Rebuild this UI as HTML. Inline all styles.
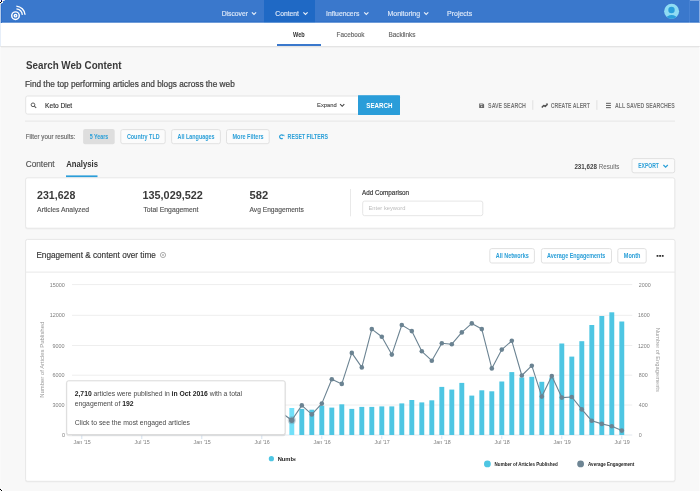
<!DOCTYPE html>
<html><head><meta charset="utf-8"><title>Search Web Content</title>
<style>
html,body{margin:0;padding:0}
body{width:700px;height:491px;overflow:hidden;position:relative;background:#f8f8f8;font-family:"Liberation Sans",sans-serif}
.t{position:absolute;left:0;top:0;white-space:nowrap;line-height:1;display:block;transform-origin:0 0}
.abs{position:absolute;box-sizing:border-box}
.card{position:absolute;box-sizing:border-box;background:#fff;border:1px solid #e6e6e6;border-radius:2px;box-shadow:0 1px 2px rgba(0,0,0,.06)}
.btn{position:absolute;box-sizing:border-box;background:#fff;border:1px solid #e1e1e1;border-radius:2px}
</style></head><body>
<!-- nav -->
<div class="abs" style="left:0;top:0;width:700px;height:23px;background:#3a78cc"></div>
<div class="abs" style="left:0;top:21px;width:700px;height:2px;background:#3272c9"></div>
<div class="abs" style="left:263.8px;top:0;width:50.8px;height:23px;background:#1f69c5"></div>
<div class="abs" style="left:688.5px;top:0;width:1px;height:23px;background:#4681d2"></div>
<svg width="700" height="24" viewBox="0 0 700 24" style="position:absolute;left:0;top:0"><rect x="0" y="22.7" width="700" height="1.3" fill="#fff"/></svg>
<!-- subnav -->
<div class="abs" style="left:0;top:23px;width:700px;height:23px;background:#fff;box-shadow:0 1px 1.5px rgba(0,0,0,.11)"></div>
<div class="abs" style="left:277px;top:44px;width:44.3px;height:2px;background:#3a78cc"></div>
<svg width="700" height="491" viewBox="0 0 700 491" style="position:absolute;left:0;top:0">
<rect x="25.70" y="96.00" width="333.80" height="18.10" rx="2" fill="#fff" stroke="#e4e4e4" stroke-width="1" />
<rect x="358.10" y="95.40" width="41.90" height="19.50" rx="0" fill="#2a9dd9" />
<path d="M358.1 95.4 H398 a2 2 0 0 1 2 2 V112.9 a2 2 0 0 1 -2 2 H358.1 Z" fill="#2a9dd9"/>
<rect x="25.00" y="120.60" width="650.00" height="1.00" rx="0" fill="#e6e6e6" />
<rect x="532.30" y="100.20" width="1.00" height="9.60" rx="0" fill="#e0e0e0" />
<rect x="596.40" y="100.20" width="1.00" height="9.60" rx="0" fill="#e0e0e0" />
<rect x="83.10" y="129.10" width="31.60" height="15.10" rx="2" fill="#dedede" />
<rect x="120.80" y="129.60" width="44.40" height="14.10" rx="2" fill="#fbfbfb" stroke="#e1e1e1" stroke-width="1" />
<rect x="171.60" y="129.60" width="48.80" height="14.10" rx="2" fill="#fbfbfb" stroke="#e1e1e1" stroke-width="1" />
<rect x="226.50" y="129.60" width="42.70" height="14.10" rx="2" fill="#fbfbfb" stroke="#e1e1e1" stroke-width="1" />
<rect x="66.00" y="175.40" width="31.50" height="2.00" rx="0" fill="#2a9dd9" />
<rect x="632.00" y="158.60" width="42.70" height="14.20" rx="2" fill="#fbfbfb" stroke="#e1e1e1" stroke-width="1" />
<rect x="25.10" y="178.00" width="650.20" height="51.40" rx="2" fill="#000" opacity="0.035"/>
<rect x="25.60" y="177.80" width="649.20" height="50.40" rx="2" fill="#fff" stroke="#e7e7e7" stroke-width="1" />
<rect x="350.00" y="189.00" width="1.00" height="27.30" rx="0" fill="#e9e9e9" />
<rect x="362.70" y="201.10" width="120.10" height="14.60" rx="2" fill="#fff" stroke="#e6e6e6" stroke-width="1" />
<rect x="25.10" y="239.90" width="650.40" height="242.60" rx="2" fill="#000" opacity="0.035"/>
<rect x="25.60" y="239.40" width="649.40" height="241.90" rx="2" fill="#fff" stroke="#e7e7e7" stroke-width="1" />
<rect x="25.60" y="271.60" width="649.40" height="1.00" rx="0" fill="#e8e8e8" />
<rect x="489.80" y="248.60" width="44.60" height="14.40" rx="2" fill="#fff" stroke="#e1e1e1" stroke-width="1" />
<rect x="541.40" y="248.60" width="70.10" height="14.40" rx="2" fill="#fff" stroke="#e1e1e1" stroke-width="1" />
<rect x="617.80" y="248.60" width="28.40" height="14.40" rx="2" fill="#fff" stroke="#e1e1e1" stroke-width="1" />
</svg>
<svg class="chart" width="700" height="491" viewBox="0 0 700 491" style="position:absolute;left:0;top:0">
<line x1="72" x2="632.3" y1="284.6" y2="284.6" stroke="#eeeeee" stroke-width="1"/>
<line x1="72" x2="632.3" y1="315.3" y2="315.3" stroke="#eeeeee" stroke-width="1"/>
<line x1="72" x2="632.3" y1="345.5" y2="345.5" stroke="#eeeeee" stroke-width="1"/>
<line x1="72" x2="632.3" y1="375.2" y2="375.2" stroke="#eeeeee" stroke-width="1"/>
<line x1="72" x2="632.3" y1="405.0" y2="405.0" stroke="#eeeeee" stroke-width="1"/>
<line x1="72" x2="632.3" y1="435.0" y2="435.0" stroke="#e3e8ee" stroke-width="1"/>
<line x1="81.8" x2="81.8" y1="435.5" y2="439" stroke="#d5e3f0" stroke-width="1"/>
<line x1="141.8" x2="141.8" y1="435.5" y2="439" stroke="#d5e3f0" stroke-width="1"/>
<line x1="201.8" x2="201.8" y1="435.5" y2="439" stroke="#d5e3f0" stroke-width="1"/>
<line x1="261.8" x2="261.8" y1="435.5" y2="439" stroke="#d5e3f0" stroke-width="1"/>
<line x1="321.8" x2="321.8" y1="435.5" y2="439" stroke="#d5e3f0" stroke-width="1"/>
<line x1="381.8" x2="381.8" y1="435.5" y2="439" stroke="#d5e3f0" stroke-width="1"/>
<line x1="441.8" x2="441.8" y1="435.5" y2="439" stroke="#d5e3f0" stroke-width="1"/>
<line x1="501.8" x2="501.8" y1="435.5" y2="439" stroke="#d5e3f0" stroke-width="1"/>
<line x1="561.8" x2="561.8" y1="435.5" y2="439" stroke="#d5e3f0" stroke-width="1"/>
<line x1="621.8" x2="621.8" y1="435.5" y2="439" stroke="#d5e3f0" stroke-width="1"/>
<rect x="289.35" y="408.0" width="4.9" height="27.0" fill="#72e0f9"/>
<rect x="299.35" y="408.9" width="4.9" height="26.1" fill="#4ec6e3"/>
<rect x="309.35" y="409.7" width="4.9" height="25.3" fill="#4ec6e3"/>
<rect x="319.35" y="405.7" width="4.9" height="29.3" fill="#4ec6e3"/>
<rect x="329.35" y="407.6" width="4.9" height="27.4" fill="#4ec6e3"/>
<rect x="339.35" y="404.3" width="4.9" height="30.7" fill="#4ec6e3"/>
<rect x="349.35" y="408.9" width="4.9" height="26.1" fill="#4ec6e3"/>
<rect x="359.35" y="406.9" width="4.9" height="28.1" fill="#4ec6e3"/>
<rect x="369.35" y="406.9" width="4.9" height="28.1" fill="#4ec6e3"/>
<rect x="379.35" y="406.4" width="4.9" height="28.6" fill="#4ec6e3"/>
<rect x="389.35" y="406.4" width="4.9" height="28.6" fill="#4ec6e3"/>
<rect x="399.35" y="403.4" width="4.9" height="31.6" fill="#4ec6e3"/>
<rect x="409.35" y="400.0" width="4.9" height="35.0" fill="#4ec6e3"/>
<rect x="419.35" y="402.4" width="4.9" height="32.6" fill="#4ec6e3"/>
<rect x="429.35" y="400.3" width="4.9" height="34.7" fill="#4ec6e3"/>
<rect x="439.35" y="386.9" width="4.9" height="48.1" fill="#4ec6e3"/>
<rect x="449.35" y="389.6" width="4.9" height="45.4" fill="#4ec6e3"/>
<rect x="459.35" y="382.9" width="4.9" height="52.1" fill="#4ec6e3"/>
<rect x="469.35" y="395.6" width="4.9" height="39.4" fill="#4ec6e3"/>
<rect x="479.35" y="390.3" width="4.9" height="44.7" fill="#4ec6e3"/>
<rect x="489.35" y="391.3" width="4.9" height="43.7" fill="#4ec6e3"/>
<rect x="499.35" y="381.5" width="4.9" height="53.5" fill="#4ec6e3"/>
<rect x="509.35" y="372.1" width="4.9" height="62.9" fill="#4ec6e3"/>
<rect x="519.35" y="377.5" width="4.9" height="57.5" fill="#4ec6e3"/>
<rect x="529.35" y="376.8" width="4.9" height="58.2" fill="#4ec6e3"/>
<rect x="539.35" y="381.8" width="4.9" height="53.2" fill="#4ec6e3"/>
<rect x="549.35" y="377.5" width="4.9" height="57.5" fill="#4ec6e3"/>
<rect x="559.35" y="343.5" width="4.9" height="91.5" fill="#4ec6e3"/>
<rect x="569.35" y="356.6" width="4.9" height="78.4" fill="#4ec6e3"/>
<rect x="579.35" y="341.2" width="4.9" height="93.8" fill="#4ec6e3"/>
<rect x="589.35" y="325.0" width="4.9" height="110.0" fill="#4ec6e3"/>
<rect x="599.35" y="316.0" width="4.9" height="119.0" fill="#4ec6e3"/>
<rect x="609.35" y="312.3" width="4.9" height="122.7" fill="#4ec6e3"/>
<rect x="619.35" y="321.5" width="4.9" height="113.5" fill="#4ec6e3"/>
<polyline fill="none" stroke="#6b8392" stroke-width="1.1" stroke-linejoin="round" points="281.8,413.0 291.8,420.3 301.8,405.4 311.8,414.4 321.8,403.6 331.8,379.3 341.8,383.9 351.8,352.9 361.8,367.4 371.8,329.1 381.8,336.8 391.8,354.6 401.8,325.0 411.8,331.1 421.8,351.3 431.8,360.7 441.8,343.2 451.8,344.2 461.8,332.4 471.8,323.4 481.8,329.1 491.8,368.4 501.8,349.6 511.8,340.8 521.8,375.5 531.8,365.7 541.8,396.6 551.8,376.1 561.8,397.6 571.8,397.0 581.8,409.4 591.8,420.8 601.8,423.9 611.8,426.2 621.8,430.6"/>
<circle cx="291.8" cy="420.3" r="4" fill="#6b8392" fill-opacity="0.33"/>
<circle cx="291.8" cy="420.3" r="2.7" fill="#6b8392"/>
<circle cx="301.8" cy="405.4" r="2.3" fill="#6b8392"/>
<circle cx="311.8" cy="414.4" r="2.3" fill="#6b8392"/>
<circle cx="321.8" cy="403.6" r="2.3" fill="#6b8392"/>
<circle cx="331.8" cy="379.3" r="2.3" fill="#6b8392"/>
<circle cx="341.8" cy="383.9" r="2.3" fill="#6b8392"/>
<circle cx="351.8" cy="352.9" r="2.3" fill="#6b8392"/>
<circle cx="361.8" cy="367.4" r="2.3" fill="#6b8392"/>
<circle cx="371.8" cy="329.1" r="2.3" fill="#6b8392"/>
<circle cx="381.8" cy="336.8" r="2.3" fill="#6b8392"/>
<circle cx="391.8" cy="354.6" r="2.3" fill="#6b8392"/>
<circle cx="401.8" cy="325.0" r="2.3" fill="#6b8392"/>
<circle cx="411.8" cy="331.1" r="2.3" fill="#6b8392"/>
<circle cx="421.8" cy="351.3" r="2.3" fill="#6b8392"/>
<circle cx="431.8" cy="360.7" r="2.3" fill="#6b8392"/>
<circle cx="441.8" cy="343.2" r="2.3" fill="#6b8392"/>
<circle cx="451.8" cy="344.2" r="2.3" fill="#6b8392"/>
<circle cx="461.8" cy="332.4" r="2.3" fill="#6b8392"/>
<circle cx="471.8" cy="323.4" r="2.3" fill="#6b8392"/>
<circle cx="481.8" cy="329.1" r="2.3" fill="#6b8392"/>
<circle cx="491.8" cy="368.4" r="2.3" fill="#6b8392"/>
<circle cx="501.8" cy="349.6" r="2.3" fill="#6b8392"/>
<circle cx="511.8" cy="340.8" r="2.3" fill="#6b8392"/>
<circle cx="521.8" cy="375.5" r="2.3" fill="#6b8392"/>
<circle cx="531.8" cy="365.7" r="2.3" fill="#6b8392"/>
<circle cx="541.8" cy="396.6" r="2.3" fill="#6b8392"/>
<circle cx="551.8" cy="376.1" r="2.3" fill="#6b8392"/>
<circle cx="561.8" cy="397.6" r="2.3" fill="#6b8392"/>
<circle cx="571.8" cy="397.0" r="2.3" fill="#6b8392"/>
<circle cx="581.8" cy="409.4" r="2.3" fill="#6b8392"/>
<circle cx="591.8" cy="420.8" r="2.3" fill="#6b8392"/>
<circle cx="601.8" cy="423.9" r="2.3" fill="#6b8392"/>
<circle cx="611.8" cy="426.2" r="2.3" fill="#6b8392"/>
<circle cx="621.8" cy="430.6" r="2.3" fill="#6b8392"/>
</svg>
<svg width="700" height="491" viewBox="0 0 700 491" style="position:absolute;left:0;top:0">
<rect x="66.20" y="381.30" width="219.40" height="55.30" rx="3" fill="#000" opacity="0.05"/>
<rect x="65.70" y="380.30" width="220.40" height="55.70" rx="3" fill="#000" opacity="0.04"/>
<rect x="66.70" y="380.80" width="218.40" height="53.80" rx="2" fill="#fff" stroke="#dadada" stroke-width="1" />
<circle cx="271.4" cy="458.7" r="2.6" fill="#4ec6e3"/>
<circle cx="487.4" cy="463.9" r="3.4" fill="#4ec6e3"/>
<circle cx="580.6" cy="463.9" r="3.4" fill="#6e8594"/>
</svg>
<svg width="700" height="491" viewBox="0 0 700 491" style="position:absolute;left:0;top:0">
<!-- logo -->
<circle cx="15.5" cy="15.65" r="4.5" fill="#fff"/>
<circle cx="15.5" cy="15.65" r="2.5" fill="none" stroke="#3a78cc" stroke-width="1.1"/>
<path d="M15.1 14.9 L16.4 15.65 L15.1 16.4 Z" fill="#3a78cc"/>
<path d="M16.46 8.82 A6.9 6.9 0 0 1 22.36 14.93" fill="none" stroke="#fff" stroke-width="1.3"/>
<path d="M16.34 6.09 A9.6 9.6 0 0 1 25.06 14.81" fill="none" stroke="#fff" stroke-width="1.4"/>
<!-- nav chevrons -->
<g fill="none" stroke="#e9f0fa" stroke-width="1.15">
<path d="M251.9 12.3 l2.1 2.1 l2.1 -2.1"/>
<path d="M303.4 12.3 l2.1 2.1 l2.1 -2.1"/>
<path d="M364.2 12.3 l2.1 2.1 l2.1 -2.1"/>
<path d="M424.1 12.3 l2.1 2.1 l2.1 -2.1"/>
</g>
<!-- avatar -->
<clipPath id="av"><circle cx="671.6" cy="11.25" r="7.5"/></clipPath>
<circle cx="671.6" cy="11.25" r="7.5" fill="#8fdcf3"/>
<circle cx="671.5" cy="10" r="3.2" fill="#2a9fdc"/>
<ellipse cx="671.6" cy="19.6" rx="5.6" ry="4.6" fill="#2a9fdc" clip-path="url(#av)"/>
<!-- search icon -->
<circle cx="33" cy="104.8" r="1.85" fill="none" stroke="#555" stroke-width="0.95"/>
<path d="M34.3 106.1 L36.2 107.8" stroke="#555" stroke-width="1.05" fill="none"/>
<!-- expand chevron -->
<path d="M340.1 104.2 l2.1 2.1 l2.1 -2.1" fill="none" stroke="#444" stroke-width="1.1"/>
<!-- save icon -->
<path d="M479.2 103.5 h3.8 l1.1 1.1 v3.5 h-4.9 Z" fill="#666"/>
<rect x="480.1" y="104.1" width="2.4" height="1" fill="#f7f7f7" opacity="0.75"/>
<circle cx="481.7" cy="106.5" r="0.7" fill="#f7f7f7" opacity="0.8"/>
<!-- trend icon -->
<path d="M541.8 107.5 L543.7 105.4 L545.2 106.5 L547 104.5" fill="none" stroke="#505050" stroke-width="1.45" stroke-linejoin="round"/>
<path d="M545.7 103.4 h2.2 v2.2 Z" fill="#505050"/>
<!-- list icon -->
<g fill="#666"><rect x="606" y="102.8" width="4.9" height="1.05"/><rect x="606" y="104.95" width="4.9" height="1.05"/><rect x="606" y="107.1" width="4.9" height="1.05"/></g>
<!-- reset icon -->
<path d="M283.15 135.85 A1.9 1.9 0 1 0 282.72 138.26" fill="none" stroke="#2a9fd8" stroke-width="1.2"/>
<path d="M282.5 134.7 h1.9 v1.9 Z" fill="#2a9fd8"/>
<!-- export chevron -->
<path d="M663.4 165 l2.2 2.2 l2.2 -2.2" fill="none" stroke="#2a9fd8" stroke-width="1.2"/>
<!-- info icon -->
<circle cx="163" cy="255" r="2.6" fill="none" stroke="#777" stroke-width="0.6"/>
<circle cx="163" cy="255" r="0.7" fill="#666"/>
<!-- dots -->
<g fill="#333"><rect x="656.6" y="255" width="1.8" height="1.8"/><rect x="659.2" y="255" width="1.8" height="1.8"/><rect x="661.8" y="255" width="1.8" height="1.8"/></g>
</svg>
<!-- edge artifacts -->
<div class="abs" style="left:0;top:0;width:1px;height:23px;background:#b5cbeb"></div>
<div class="abs" style="left:1px;top:3px;width:1px;height:20px;background:#2f6fc8"></div>
<div class="abs" style="left:0;top:23px;width:1px;height:22.5px;background:#e6eef9"></div>
<div class="abs" style="left:0;top:47px;width:1px;height:444px;background:#fafafa"></div>
<div class="abs" style="left:699px;top:0;width:1px;height:23px;background:#8bafe4"></div>
<div class="abs" style="left:699px;top:47px;width:1px;height:444px;background:#fbfbfb"></div>
<div class="abs" style="left:690px;top:0;width:10px;height:1px;background:#7ea7e0"></div>
<svg width="6" height="6" viewBox="0 0 6 6" style="position:absolute;left:0;top:0" shape-rendering="crispEdges">
<rect x="0" y="0" width="3" height="3" fill="#fff"/>
<rect x="3" y="0" width="1" height="1" fill="#f4f1e4"/><rect x="4" y="0" width="1" height="1" fill="#a9c3ea"/>
<rect x="2" y="1" width="1" height="1" fill="#c4d6f0"/><rect x="1" y="2" width="1" height="1" fill="#d5e2f5"/>
<rect x="0" y="3" width="1" height="1" fill="#f6f6e6"/><rect x="1" y="3" width="1" height="1" fill="#8fb0e2"/>
<rect x="1" y="0" width="1" height="1" fill="#0a0a90"/><rect x="1" y="1" width="1" height="1" fill="#000"/><rect x="0" y="2" width="1" height="1" fill="#000"/>
</svg>
<svg width="4" height="4" viewBox="0 0 4 4" style="position:absolute;left:0;top:487px" shape-rendering="crispEdges">
<rect x="0" y="1" width="1" height="1" fill="#eee"/><rect x="1" y="1" width="1" height="2" fill="#fff"/><rect x="2" y="2" width="1" height="2" fill="#fff"/><rect x="0" y="3" width="1" height="1" fill="#fff"/>
<rect x="0" y="2" width="1" height="1" fill="#000"/><rect x="1" y="3" width="1" height="1" fill="#000"/>
</svg>
<div style="position:absolute;left:0;top:0;width:700px;height:491px;will-change:transform">
<span class="t" style="font-size:7.1px;font-weight:400;color:#dde8f8;transform:translate(221.70px,11px) scaleX(0.9519);-webkit-text-stroke:0.15px #dde8f8;">Discover</span>
<span class="t" style="font-size:7.1px;font-weight:400;color:#dde8f8;transform:translate(275.30px,11px) scaleX(0.9480);-webkit-text-stroke:0.15px #dde8f8;">Content</span>
<span class="t" style="font-size:7.1px;font-weight:400;color:#dde8f8;transform:translate(326.04px,11px) scaleX(0.9588);-webkit-text-stroke:0.15px #dde8f8;">Influencers</span>
<span class="t" style="font-size:7.1px;font-weight:400;color:#dde8f8;transform:translate(387.40px,11px) scaleX(0.9879);-webkit-text-stroke:0.15px #dde8f8;">Monitoring</span>
<span class="t" style="font-size:7.1px;font-weight:400;color:#dde8f8;transform:translate(447.00px,11px) scaleX(0.9880);-webkit-text-stroke:0.15px #dde8f8;">Projects</span>
<span class="t" style="font-size:6.5px;font-weight:700;color:#333;transform:translate(293.00px,32px) scaleX(0.8571);">Web</span>
<span class="t" style="font-size:6.5px;font-weight:400;color:#666;transform:translate(336.60px,32px) scaleX(0.9786);-webkit-text-stroke:0.15px #666;">Facebook</span>
<span class="t" style="font-size:6.5px;font-weight:400;color:#666;transform:translate(388.40px,32px) scaleX(0.9852);-webkit-text-stroke:0.15px #666;">Backlinks</span>
<span class="t" style="font-size:10.3px;font-weight:700;color:#3a3a3a;transform:translate(26.00px,61px) scaleX(0.9505);">Search Web Content</span>
<span class="t" style="font-size:8.3px;font-weight:400;color:#3c3c3c;transform:translate(25.00px,80px) scaleX(0.9952);-webkit-text-stroke:0.2px #3c3c3c;">Find the top performing articles and blogs across the web</span>
<span class="t" style="font-size:7px;font-weight:400;color:#333;transform:translate(45.10px,102px) scaleX(0.9414);-webkit-text-stroke:0.15px #333;">Keto Diet</span>
<span class="t" style="font-size:6.1px;font-weight:400;color:#4a4a4a;transform:translate(317.10px,102px) scaleX(0.9450);-webkit-text-stroke:0.12px #4a4a4a;">Expand</span>
<span class="t" style="font-size:7px;font-weight:700;color:#fff;transform:translate(366.30px,102px) scaleX(0.8862);">SEARCH</span>
<span class="t" style="font-size:6.3px;font-weight:700;color:#777;transform:translate(488.10px,103px) scaleX(0.8400);">SAVE SEARCH</span>
<span class="t" style="font-size:6.3px;font-weight:700;color:#777;transform:translate(550.70px,103px) scaleX(0.8187);">CREATE ALERT</span>
<span class="t" style="font-size:6.3px;font-weight:700;color:#777;transform:translate(615.00px,103px) scaleX(0.8333);">ALL SAVED SEARCHES</span>
<span class="t" style="font-size:6.5px;font-weight:400;color:#666;transform:translate(25.80px,134px) scaleX(0.9569);-webkit-text-stroke:0.15px #666;">Filter your results:</span>
<span class="t" style="font-size:6.5px;font-weight:700;color:#2a9fd8;transform:translate(89.70px,134px) scaleX(0.8217);">5 Years</span>
<span class="t" style="font-size:6.5px;font-weight:700;color:#2a9fd8;transform:translate(126.90px,134px) scaleX(0.8308);">Country TLD</span>
<span class="t" style="font-size:6.5px;font-weight:700;color:#2a9fd8;transform:translate(177.50px,134px) scaleX(0.8341);">All Languages</span>
<span class="t" style="font-size:6.5px;font-weight:700;color:#2a9fd8;transform:translate(232.50px,134px) scaleX(0.8432);">More Filters</span>
<span class="t" style="font-size:6.5px;font-weight:700;color:#2a9fd8;transform:translate(287.60px,134px) scaleX(0.8080);">RESET FILTERS</span>
<span class="t" style="font-size:8.4px;font-weight:400;color:#555;transform:translate(25.70px,160px) scaleX(0.9862);-webkit-text-stroke:0.15px #555;">Content</span>
<span class="t" style="font-size:8.4px;font-weight:700;color:#333;transform:translate(66.30px,160px) scaleX(0.9176);">Analysis</span>
<span class="t" style="font-size:6.5px;font-weight:400;color:#666;transform:translate(574.40px,164px) scaleX(0.9596);"><b style="color:#444">231,628</b> Results</span>
<span class="t" style="font-size:6.3px;font-weight:700;color:#2a9fd8;transform:translate(638.20px,163px) scaleX(0.8000);">EXPORT</span>
<span class="t" style="font-size:11.6px;font-weight:700;color:#3a3a3a;transform:translate(37.10px,189px) scaleX(0.9119);">231,628</span>
<span class="t" style="font-size:7.1px;font-weight:400;color:#555;transform:translate(37.10px,207px) scaleX(0.9630);-webkit-text-stroke:0.15px #555;">Articles Analyzed</span>
<span class="t" style="font-size:11.6px;font-weight:700;color:#3a3a3a;transform:translate(142.46px,189px) scaleX(0.9365);">135,029,522</span>
<span class="t" style="font-size:7.1px;font-weight:400;color:#555;transform:translate(143.40px,207px) scaleX(0.9632);-webkit-text-stroke:0.15px #555;">Total Engagement</span>
<span class="t" style="font-size:11.6px;font-weight:700;color:#3a3a3a;transform:translate(249.50px,189px) scaleX(0.9632);">582</span>
<span class="t" style="font-size:7.1px;font-weight:400;color:#555;transform:translate(249.50px,207px) scaleX(0.9379);-webkit-text-stroke:0.15px #555;">Avg Engagements</span>
<span class="t" style="font-size:6.8px;font-weight:400;color:#333;transform:translate(362.00px,190px) scaleX(0.9300);-webkit-text-stroke:0.15px #333;">Add Comparison</span>
<span class="t" style="font-size:6px;font-weight:400;color:#bbb;transform:translate(368.50px,205px) scaleX(0.9605);">Enter keyword</span>
<span class="t" style="font-size:9px;font-weight:400;color:#333;transform:translate(36.39px,251px) scaleX(0.9115);-webkit-text-stroke:0.15px #333;">Engagement &amp; content over time</span>
<span class="t" style="font-size:6.3px;font-weight:700;color:#2a9fd8;transform:translate(495.80px,253px) scaleX(0.8632);">All Networks</span>
<span class="t" style="font-size:6.3px;font-weight:700;color:#2a9fd8;transform:translate(547.00px,253px) scaleX(0.8603);">Average Engagements</span>
<span class="t" style="font-size:6.3px;font-weight:700;color:#2a9fd8;transform:translate(623.80px,253px) scaleX(0.8789);">Month</span>
<span class="t" style="font-size:5.8px;font-weight:400;color:#7e7e7e;transform:translate(49.66px,283px) scaleX(0.9400);">15000</span>
<span class="t" style="font-size:5.8px;font-weight:400;color:#7e7e7e;transform:translate(49.66px,313px) scaleX(0.9400);">12000</span>
<span class="t" style="font-size:5.8px;font-weight:400;color:#7e7e7e;transform:translate(52.48px,344px) scaleX(0.9400);">9000</span>
<span class="t" style="font-size:5.8px;font-weight:400;color:#7e7e7e;transform:translate(52.48px,373px) scaleX(0.9400);">6000</span>
<span class="t" style="font-size:5.8px;font-weight:400;color:#7e7e7e;transform:translate(52.48px,403px) scaleX(0.9400);">3000</span>
<span class="t" style="font-size:5.8px;font-weight:400;color:#7e7e7e;transform:translate(61.88px,433px) scaleX(0.9400);">0</span>
<span class="t" style="font-size:5.8px;font-weight:400;color:#7e7e7e;transform:translate(638.80px,283px) scaleX(0.9200);">2000</span>
<span class="t" style="font-size:5.8px;font-weight:400;color:#7e7e7e;transform:translate(637.88px,313px) scaleX(0.9200);">1600</span>
<span class="t" style="font-size:5.8px;font-weight:400;color:#7e7e7e;transform:translate(637.88px,344px) scaleX(0.9200);">1200</span>
<span class="t" style="font-size:5.8px;font-weight:400;color:#7e7e7e;transform:translate(638.80px,373px) scaleX(0.9200);">800</span>
<span class="t" style="font-size:5.8px;font-weight:400;color:#7e7e7e;transform:translate(638.80px,403px) scaleX(0.9200);">400</span>
<span class="t" style="font-size:5.8px;font-weight:400;color:#7e7e7e;transform:translate(638.80px,433px) scaleX(0.9200);">0</span>
<span class="t" style="font-size:5.8px;font-weight:400;color:#7e7e7e;transform:translate(73.62px,440px) scaleX(0.9200);">Jan '15</span>
<span class="t" style="font-size:5.8px;font-weight:400;color:#7e7e7e;transform:translate(134.54px,440px) scaleX(0.9200);">Jul '15</span>
<span class="t" style="font-size:5.8px;font-weight:400;color:#7e7e7e;transform:translate(193.62px,440px) scaleX(0.9200);">Jan '15</span>
<span class="t" style="font-size:5.8px;font-weight:400;color:#7e7e7e;transform:translate(254.54px,440px) scaleX(0.9200);">Jul '16</span>
<span class="t" style="font-size:5.8px;font-weight:400;color:#7e7e7e;transform:translate(313.62px,440px) scaleX(0.9200);">Jan '16</span>
<span class="t" style="font-size:5.8px;font-weight:400;color:#7e7e7e;transform:translate(374.54px,440px) scaleX(0.9200);">Jul '17</span>
<span class="t" style="font-size:5.8px;font-weight:400;color:#7e7e7e;transform:translate(433.62px,440px) scaleX(0.9200);">Jan '18</span>
<span class="t" style="font-size:5.8px;font-weight:400;color:#7e7e7e;transform:translate(494.54px,440px) scaleX(0.9200);">Jul '18</span>
<span class="t" style="font-size:5.8px;font-weight:400;color:#7e7e7e;transform:translate(553.62px,440px) scaleX(0.9200);">Jan '19</span>
<span class="t" style="font-size:5.8px;font-weight:400;color:#7e7e7e;transform:translate(614.54px,440px) scaleX(0.9200);">Jul '19</span>
<span class="t" style="font-size:6.0px;font-weight:400;color:#999;transform:translate(42.30px,359.80px) rotate(-90deg) scaleX(0.9883) translate(-38.52px,-3.00px);">Number of Articles Published</span>
<span class="t" style="font-size:6.0px;font-weight:400;color:#999;transform:translate(657.50px,359.80px) rotate(90deg) scaleX(0.9612) translate(-33.35px,-3.00px);">Number of Engagements</span>
<span class="t" style="font-size:7.3px;font-weight:400;color:#484848;transform:translate(74.70px,390px) scaleX(0.9294);"><b style="color:#222">2,710</b> articles were published in <b style="color:#222">in Oct 2016</b> with a total</span>
<span class="t" style="font-size:7.3px;font-weight:400;color:#484848;transform:translate(74.70px,400px) scaleX(0.9365);">engagement of <b style="color:#222">192</b></span>
<span class="t" style="font-size:7.3px;font-weight:400;color:#484848;transform:translate(74.70px,419px) scaleX(0.9341);-webkit-text-stroke:0px #484848;">Click to see the most engaged articles</span>
<span class="t" style="font-size:5.8px;font-weight:700;color:#222;transform:translate(277.70px,457px) scaleX(0.9900);width:17.8px;overflow:hidden;">Numbe</span>
<span class="t" style="font-size:5.6px;font-weight:700;color:#222;transform:translate(494.60px,462px) scaleX(0.8090);">Number of Articles Published</span>
<span class="t" style="font-size:5.6px;font-weight:700;color:#222;transform:translate(588.00px,462px) scaleX(0.8123);">Average Engagement</span>
</div>
</body></html>
